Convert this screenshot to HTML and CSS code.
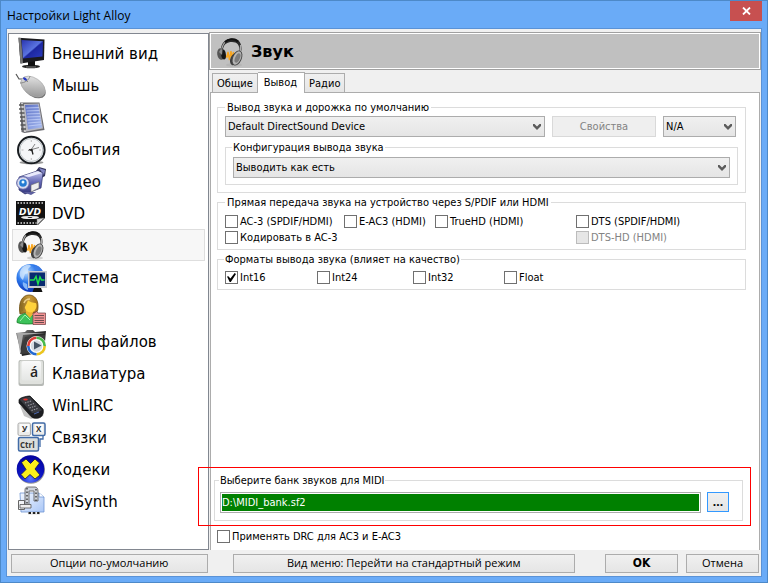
FILE: index.html
```
<!DOCTYPE html>
<html lang="ru">
<head>
<meta charset="utf-8">
<title>Настройки Light Alloy</title>
<link rel="stylesheet" href="styles.css">
</head>
<body>
<svg class="defs" aria-hidden="true">
  <defs>
    <linearGradient id="g-screen" x1="0" y1="0" x2="1" y2="1"><stop offset="0" stop-color="#2a35b0"/><stop offset=".5" stop-color="#5a74e0"/><stop offset=".55" stop-color="#1d27a0"/><stop offset="1" stop-color="#2b3cc0"/></linearGradient>
    <linearGradient id="g-gray" x1="0" y1="0" x2="1" y2="1"><stop offset="0" stop-color="#f0f0f0"/><stop offset="1" stop-color="#8a8a8a"/></linearGradient>
    <linearGradient id="g-dark" x1="0" y1="0" x2="1" y2="1"><stop offset="0" stop-color="#999"/><stop offset=".4" stop-color="#333"/><stop offset="1" stop-color="#0c0c0c"/></linearGradient>
    <linearGradient id="g-violet" x1="0" y1="0" x2="0" y2="1"><stop offset="0" stop-color="#c4c6ee"/><stop offset=".5" stop-color="#6266b4"/><stop offset="1" stop-color="#34377c"/></linearGradient>
    <linearGradient id="g-page" x1="0" y1="0" x2="1" y2="1"><stop offset="0" stop-color="#5b6fc4"/><stop offset="1" stop-color="#a9bdf2"/></linearGradient>
    <radialGradient id="g-globe" cx=".35" cy=".3" r=".8"><stop offset="0" stop-color="#b8dcff"/><stop offset=".45" stop-color="#2a78ec"/><stop offset="1" stop-color="#0522a8"/></radialGradient>
    <radialGradient id="g-codec" cx=".5" cy=".85" r=".8"><stop offset="0" stop-color="#5a78ff"/><stop offset=".5" stop-color="#0d16c4"/><stop offset="1" stop-color="#0404a0"/></radialGradient>
    <linearGradient id="g-key" x1="0" y1="0" x2="0" y2="1"><stop offset="0" stop-color="#fafafa"/><stop offset="1" stop-color="#e4e6e4"/></linearGradient>
    <linearGradient id="g-doc" x1="0" y1="0" x2="1" y2="1"><stop offset="0" stop-color="#f2f7ff"/><stop offset="1" stop-color="#a9c6f6"/></linearGradient>
    <linearGradient id="g-hair" x1="0" y1="0" x2="1" y2="0"><stop offset="0" stop-color="#8a6a22"/><stop offset=".5" stop-color="#c79a3c"/><stop offset="1" stop-color="#a87418"/></linearGradient>
    <symbol id="headphones" viewBox="0 1 32 30">
      <ellipse cx="19" cy="29" rx="8" ry="1.800" fill="#aaa" opacity=".5"/>
      <path d="M6 12C7 6 11 3 17 2.500c7-.5 10 5 9.500 12l-2 1C25 9 22 6 17 6c-5 0-8 2-9 7z" fill="#2a2a2a"/>
      <path d="M10 6c3-3 9-4 13-.5" stroke="#111" stroke-width="2" fill="none"/>
      <path d="M7 12c1-3 2-5 3-5.500M25.500 9v6" stroke="#aaa" stroke-width="1.200" fill="none"/>
      <path d="M10 20l2 1 1-5 1.500 8 1.500-9 1 8 1.500-7 .5 4" stroke="#f9a51c" stroke-width="1.400" fill="none"/>
      <ellipse cx="6" cy="18" rx="3.800" ry="5.800" transform="rotate(-8 6 18)" fill="#555"/>
      <ellipse cx="8.500" cy="18.500" rx="2.400" ry="5" transform="rotate(-8 8.500 18.500)" fill="#161616"/>
      <path d="M4 16l2-3 1.500 1-.5 5z" fill="#8e8e8e"/>
      <ellipse cx="19.500" cy="23" rx="4" ry="6.500" transform="rotate(24 19.500 23)" fill="#3f3f3f"/>
      <ellipse cx="22" cy="22" rx="4.300" ry="7.500" transform="rotate(24 22 22)" fill="#b4b4b4" stroke="#444" stroke-width=".9"/>
      <ellipse cx="22.500" cy="22" rx="2.300" ry="5" transform="rotate(24 22.500 22)" fill="#7c7c7c"/>
    </symbol>
    <symbol id="chevron" viewBox="0 0 8 6"><path d="M0 0h1.500L4 2.500 6.500 0H8v2L4 6 0 2z" fill="#5c5c5c"/></symbol>
  </defs>
</svg>

<div class="window">
  <header class="titlebar">
    <h1 class="title">Настройки Light Alloy</h1>
    <button class="close" type="button" aria-label="Закрыть"><svg width="9" height="8" viewBox="0 0 9 8"><path d="M1 0.500L8 7.500M8 .5L1 7.500" stroke="#fff" stroke-width="1.800"/></svg></button>
  </header>

  <div class="client">
    <main class="content">
      <nav class="sections">
        <a class="section" href="#"><svg class="icon" viewBox="0 1 32 30">
          <ellipse cx="15" cy="29.500" rx="9" ry="1.800" fill="#222"/><path d="M12 24h7v5h-7z" fill="#111"/>
          <path d="M2.500 .8L28.500 2.500 28 23 4.500 26.500z" fill="#1a1a1e"/><path d="M2.500 .8L5 1l2 25-2.500.5z" fill="#777"/>
          <path d="M5.500 3L27 4.300 26.500 19.500 7 21.500z" fill="url(#g-screen)"/><path d="M10 30h10" stroke="#777"/></svg>Внешний вид</a>
        <a class="section" href="#"><svg class="icon" viewBox="0 1 32 30">
          <path d="M0 5l3 5 6 0" stroke="#555" fill="none" stroke-width="1.200"/>
          <ellipse cx="18" cy="19.500" rx="13" ry="8" transform="rotate(34 18 19.500)" fill="#777"/>
          <ellipse cx="17" cy="17.500" rx="13.500" ry="8.500" transform="rotate(34 17 17.500)" fill="url(#g-gray)" stroke="#aaa" stroke-width=".7"/>
          <path d="M4 14c5 0 9-3 10-7M9 10l3 3" stroke="#888" fill="none"/><ellipse cx="9" cy="10" rx="2.200" ry="1.300" transform="rotate(34 9 10)" fill="#2436c0"/></svg>Мышь</a>
        <a class="section" href="#"><svg class="icon" viewBox="0 1 32 30">
          <path d="M4 1.500h19.500l5 27.500-20 3-3-1z" fill="#6a6a70"/><path d="M7 3l16-.5 4 25-17 3z" fill="#b8b8c0"/><path d="M9 4l13-.5 4 23-14 2z" fill="url(#g-page)"/>
          <path d="M10 7l13-.5M10.500 10l13-.5M11 13l13-.5M11.300 16l13-.5M11.600 19l13-.7M12 22l13-1M12.500 25l13-1.500" stroke="#c4d0f8" stroke-width=".8"/>
          <path d="M6 2l3 29" stroke="#ccc" stroke-width="2"/><path d="M3 4h5M3 8h5M3.500 12h5M4 16h5M4 20h5M4.500 24h5M5 28h5" stroke="#555" stroke-width="1.600"/></svg>Список</a>
        <a class="section" href="#"><svg class="icon" viewBox="0 1 32 30">
          <ellipse cx="15.500" cy="29.500" rx="12" ry="1.700" fill="#999"/><circle cx="15.300" cy="17" r="13.300" fill="#f5f6f8" stroke="#181c20" stroke-width="2"/><circle cx="15.300" cy="17" r="11.500" fill="none" stroke="#b9c0c4" stroke-width="1"/>
          <path d="M15.300 7v2M15.300 25v2M5.500 17h2M23 17h2" stroke="#bbb"/><path d="M12 17.500l11-3M15 17l4-6" stroke="#777" stroke-width=".9" fill="none"/><path d="M13 16.500l3 1 1 4" stroke="#222" stroke-width="1.300" fill="none"/><circle cx="15.500" cy="17" r="1.200" fill="#222"/></svg>События</a>
        <a class="section" href="#"><svg class="icon" viewBox="0 1 32 30">
          <path d="M20 6l3-4 7 2-1 7-7 4z" fill="#34355c"/><path d="M23 3l6 2-1 5-3-4z" fill="#8185c4"/>
          <path d="M3 12l18-6 6 2-2 15-16 6-6-4z" fill="url(#g-violet)" stroke="#30336d" stroke-width=".7"/><path d="M7 11l15-5 4 2-13 4z" fill="#e8e9fb"/>
          <circle cx="7" cy="18" r="6.300" fill="#d7daef" stroke="#555a9c"/><circle cx="7" cy="18" r="3.800" fill="#237bd3"/><circle cx="7" cy="17" r="1.500" fill="#e8fbff"/>
          <path d="M15 20l8-3v6l-8 4z" fill="#eee" stroke="#666" stroke-width=".6"/><path d="M7 27l8 3 5-3-5 0z" fill="#5c5f9e"/></svg>Видео</a>
        <a class="section" href="#"><svg class="icon" viewBox="0 1 32 30">
          <path d="M0 4h29v17l-7 7H0z" fill="#121212"/><path d="M21 28v-6l7-1z" fill="#ddd" stroke="#777" stroke-width=".5"/>
          <path d="M1.500 6h27M1.500 26h19" stroke="#ddd" stroke-width="1.600" stroke-dasharray="1.500 1.500"/>
          <text class="ic-dvd" x="3" y="18">DVD</text><ellipse cx="14" cy="20.500" rx="9" ry="1.600" fill="#eee"/><ellipse cx="14" cy="20.500" rx="2.500" ry=".6" fill="#222"/></svg>DVD</a>
        <a class="section selected" href="#" aria-current="page"><svg class="icon"><use href="#headphones"/></svg>Звук</a>
        <a class="section" href="#"><svg class="icon" viewBox="0 1 32 30">
          <circle cx="14.500" cy="17" r="14" fill="url(#g-globe)"/><path d="M6 7c3-4 8-4 9-2l-3 3 1 4-4 1-2 6c-3-2-5-7-1-12z" fill="#ddeeff" opacity=".7"/><path d="M19 4c4 1 7 4 8 7h-6l-3-4z" fill="#3f80e8" opacity=".8"/><path d="M7 21l4 2 1 6c-4-1-6-5-5-8z" fill="#85b8fa"/>
          <path d="M12 10h19v17H12z" fill="#c9ccd0"/><path d="M13.500 11.500h15.500v13.500H13.500z" fill="#082a70"/><path d="M14 19h4l2-3.500 2 7.500 2-7 1.500 3h3" stroke="#1fe04b" stroke-width="1.500" fill="none"/><path d="M18 27h7l1.500 4h-10z" fill="#111"/></svg>Система</a>
        <a class="section" href="#"><svg class="icon" viewBox="0 1 32 30">
          <path d="M4 21C2 10 6 2 13 2c6 0 9 5 9 11 0 3 0 5-2 7H8z" fill="url(#g-hair)" stroke="#6f4e10" stroke-width=".8"/>
          <path d="M1 29.500c0-5 3-8 8-9l5 3 4-2c4 1 5 4 5 8-6 2-17 2-22 0z" fill="#3cc25a" stroke="#157b25" stroke-width=".8"/>
          <path d="M10 17h7v4l-3 4-4-4z" fill="#eab42e"/><ellipse cx="14.500" cy="13" rx="6" ry="6.500" fill="#ffd23c"/>
          <path d="M5.500 18C4 9 8 4 14 4c4 0 7 2 7 6-4 0-8-1-9-3-1 4-3 6-5 11z" fill="url(#g-hair)"/><path d="M8 10c1-3 3-4 6-4" stroke="#ecd08c" stroke-width="1.500" fill="none"/>
          <path d="M4 28l5-6 5 5" stroke="#a6eeb2" fill="none"/>
          <path d="M17 20h2l1-2 2 2h7.500v11.500H17z" fill="#f29494" stroke="#6b3a3d" stroke-width=".7"/><path d="M18.500 22.500h9.500M18.500 25h9.500M18.500 27.500h9.500M18.500 29.500h9.500" stroke="#5e4447" stroke-width=".9"/></svg>OSD</a>
        <a class="section" href="#"><svg class="icon" viewBox="0 1 32 30">
          <path d="M0 8l9-1 2-2h6l2 2 11-1-2 21-22 4z" fill="url(#g-dark)"/><path d="M1 8l3 20L7 10l22-2" fill="#aaa"/><path d="M4 29L9 12l20-2-1 18z" fill="#3c3c3c"/>
          <circle cx="20.500" cy="21" r="10" fill="#fff"/><g fill="none" stroke-width="2.600"><path d="M12.300 21a8.200 8.200 0 0 1 8.200-8.200" stroke="#df3e35"/><path d="M20.500 12.800a8.200 8.200 0 0 1 8.200 8.200" stroke="#49b94c"/><path d="M28.700 21a8.200 8.200 0 0 1-8.200 8.200" stroke="#ecc51c"/><path d="M20.500 29.200a8.200 8.200 0 0 1-8.200-8.200" stroke="#2369d2"/></g><circle cx="20.500" cy="21" r="5.800" fill="#d5dbe3"/><path d="M18 16.500l7.500 4-7.500 4z" fill="#455364"/></svg>Типы файлов</a>
        <a class="section" href="#"><svg class="icon" viewBox="0 1 32 30">
          <rect x="2.500" y="3" width="25.500" height="26" rx="2" fill="#b6b9b5"/><rect x="3.500" y="3.500" width="23.500" height="23.500" rx="2" fill="#dfe1dd"/><rect x="5.500" y="4" width="19.500" height="19.500" rx="2" fill="url(#g-key)"/><text class="ic-key" x="14" y="20">á</text></svg>Клавиатура</a>
        <a class="section" href="#"><svg class="icon" viewBox="0 1 32 30">
          <path d="M4 17l4 10 7 3 13-3" fill="#c4c4c4"/><path d="M3 11c0-2 7-4 11-4l13 13c1 3 0 7-3 8.500s-7 1-9-1L3 14z" fill="#1d1e22" stroke="#111" stroke-width=".7"/><path d="M4 11c0-2 7-3 10-3l12 13c-2 2-7 3-10 3z" fill="#3a3b41"/>
          <ellipse cx="9.500" cy="10.500" rx="2.300" ry="1.100" fill="#e3312c"/><path d="M9 14l6-2M12 16.500l6-2M13.500 19l6-2M15.500 21.500l6-2" stroke="#9c9ca4" stroke-width="1.100" stroke-dasharray="1.400 1.100"/><path d="M18 25l5-2" stroke="#4d69b2"/></svg>WinLIRC</a>
        <a class="section" href="#"><svg class="icon" viewBox="0 1 32 30">
          <path d="M27 14v4h-3v8" stroke="#416ba7" fill="none" stroke-width="1.300"/><rect x="2" y="2" width="12.500" height="12.500" rx="1.500" fill="#ececea" stroke="#aaa"/><rect x="16.500" y="2" width="12.500" height="12.500" rx="1.500" fill="#ececea" stroke="#416ba7" stroke-width="1.500"/><rect x="2.500" y="16.500" width="20" height="13.500" rx="1.500" fill="#dcdedc" stroke="#416ba7" stroke-width="1.500"/><path d="M4 3h9v8H4zM19 3h8v8h-8z" fill="#fafafa"/>
          <text class="ic-cap" x="6" y="11">У</text><text class="ic-cap" x="20" y="11">X</text><text class="ic-cap" x="4" y="27">Ctrl</text></svg>Связки</a>
        <a class="section" href="#"><svg class="icon" viewBox="0 1 32 30">
          <circle cx="15" cy="16.800" r="14" fill="#999"/><circle cx="14.500" cy="16" r="13.800" fill="url(#g-codec)"/><path d="M5.500 9.500l4.500-3.500 4.500 4.500L19 6l4.500 4-4.500 6 5 6-5 4-5-4.500L9 26l-4-4.500 5-5z" fill="#fbf01c" stroke="#131346" stroke-width=".8" stroke-linejoin="round"/></svg>Кодеки</a>
        <a class="section" href="#"><svg class="icon" viewBox="0 1 32 30">
          <path d="M4 8h19l5 4v15H5z" fill="url(#g-doc)" stroke="#6e95d3" stroke-width=".8"/><path d="M23 8v4h5" fill="#fff" stroke="#6e95d3" stroke-width=".8"/>
          <path d="M2.500 15.500h6v9h-6z" fill="#f1f3f6" stroke="#666"/><path d="M9 20V5c0-2 1-3 3-3h7c2 0 3 2 3 4v10h-4V6h-5v14z" fill="#cfd4dc" stroke="#555" stroke-width=".8"/><path d="M11 3v16M20 4v12" stroke="#222" stroke-width="1.200" stroke-dasharray="1.500 2"/><path d="M4 19.500h11v3.500H4z" fill="#eee" stroke="#555" stroke-width=".8"/><path d="M12 27h12v3H12z" fill="#eee"/><path d="M12.500 28h11" stroke="#222" stroke-width="2" stroke-dasharray="2.500 1.800"/></svg>AviSynth</a>
      </nav>

      <section class="page">
        <header class="page-head"><svg class="icon"><use href="#headphones"/></svg><h2>Звук</h2></header>
        <div class="tabs" role="tablist">
          <button class="tab" type="button" role="tab">Общие</button>
          <button class="tab active" type="button" role="tab" aria-selected="true">Вывод</button>
          <button class="tab" type="button" role="tab">Радио</button>
        </div>
        <form class="panel">
          <fieldset class="group output">
            <legend class="inset">Вывод звука и дорожка по умолчанию</legend>
            <div class="device-row">
              <div class="select grow"><select aria-label="Устройство вывода"><option>Default DirectSound Device</option></select><svg><use href="#chevron"/></svg></div>
              <button class="btn props" type="button" disabled>Свойства</button>
              <div class="select track"><select aria-label="Дорожка"><option>N/A</option></select><svg><use href="#chevron"/></svg></div>
            </div>
            <fieldset class="group nested">
              <legend>Конфигурация вывода звука</legend>
              <div class="select"><select aria-label="Конфигурация вывода звука"><option>Выводить как есть</option></select><svg><use href="#chevron"/></svg></div>
            </fieldset>
          </fieldset>

          <fieldset class="group spdif">
            <legend class="inset">Прямая передача звука на устройство через S/PDIF или HDMI</legend>
            <div class="checks passthrough">
              <label class="check"><input type="checkbox">AC-3 (SPDIF/HDMI)</label>
              <label class="check"><input type="checkbox">E-AC3 (HDMI)</label>
              <label class="check"><input type="checkbox">TrueHD (HDMI)</label>
              <label class="check"><input type="checkbox">DTS (SPDIF/HDMI)</label>
              <label class="check wide"><input type="checkbox">Кодировать в AC-3</label>
              <label class="check off"><input type="checkbox" disabled>DTS-HD (HDMI)</label>
            </div>
          </fieldset>

          <fieldset class="group">
            <legend>Форматы вывода звука (влияет на качество)</legend>
            <div class="checks formats">
              <label class="check"><input type="checkbox" checked>Int16</label>
              <label class="check"><input type="checkbox">Int24</label>
              <label class="check"><input type="checkbox">Int32</label>
              <label class="check"><input type="checkbox">Float</label>
            </div>
          </fieldset>

          <div class="midi">
            <fieldset class="group">
              <legend>Выберите банк звуков для MIDI</legend>
              <div class="file-row">
                <input class="path" type="text" value="D:\MIDI_bank.sf2" aria-label="Банк звуков для MIDI">
                <button class="btn browse" type="button">...</button>
              </div>
            </fieldset>
          </div>
          <label class="check"><input type="checkbox">Применять DRC для AC3 и E-AC3</label>
        </form>
      </section>
    </main>

    <footer class="actions">
      <button class="btn defaults" type="button">Опции по-умолчанию</button>
      <button class="btn menu-view" type="button">Вид меню: Перейти на стандартный режим</button>
      <button class="btn ok" type="button">OK</button>
      <button class="btn cancel" type="button">Отмена</button>
    </footer>
  </div>
</div>
</body>
</html>
```
FILE: styles.css
```
* { box-sizing: border-box; }

body {
  margin: 0;
  font: 11px/13px "DejaVu Sans Condensed", "DejaVu Sans", sans-serif;
  color: #000;
}

h1, h2 { margin: 0; font-weight: normal; }
button, input, select { font: inherit; color: inherit; margin: 0; border-radius: 0; }
.defs { position: absolute; width: 0; height: 0; }

.window {
  display: flex;
  flex-direction: column;
  min-height: 100vh;
  padding: 0 5px 5px;
  border: 1px solid #4d89c8;
  background: #6aabf7;
}

.titlebar { display: flex; justify-content: space-between; height: 27px; }
.title { font: 12px/27px "Open Sans", "Noto Sans", sans-serif; padding: 1px 0 0 1px; }
.close {
  display: flex;
  align-items: center;
  justify-content: center;
  width: 32px;
  height: 20px;
  padding: 0;
  border: 0;
  background: #c75050;
}

.client {
  display: flex;
  flex: 1;
  flex-direction: column;
  border: 1px solid #5a92d6;
  background: #f0f0f0;
}

.content { display: flex; flex: 1; padding: 3px 0 0 1px; }

.sections {
  flex: none;
  width: 201px;
  margin-top: 1px;
  padding: 3px;
  border: 1px solid #828790;
  background: #fff;
}
.section {
  display: flex;
  align-items: flex-start;
  gap: 4px;
  height: 32px;
  padding: 0 3px;
  border: 1px solid transparent;
  color: #000;
  font: 15px/32px "DejaVu Sans", sans-serif;
  text-decoration: none;
}
.section.selected { border-color: #dedede; background: #f7f7f7; }
.icon { flex: none; width: 32px; height: 30px; overflow: visible; }
.ic-dvd { font: italic bold 9px "DejaVu Sans", sans-serif; fill: #fff; }
.ic-key { font: 600 14px "Open Sans", sans-serif; fill: #222; }
.ic-cap { font: bold 8px "Open Sans", sans-serif; fill: #333; }

.page { display: flex; flex: 1; flex-direction: column; min-width: 0; }
.page-head {
  display: flex;
  align-items: center;
  gap: 4px;
  height: 38px;
  padding: 2px 0 0 5px;
  border: 1px solid #a0a0a0;
  background: #c0c0c0;
  box-shadow: inset 0 0 0 1px #fff;
}
.page-head h2 { font: bold 16px/20px "DejaVu Sans", sans-serif; }

.tabs { display: flex; align-items: flex-end; height: 22px; padding-left: 3px; }
.tab {
  height: 19px;
  padding: 0 4px;
  border: 1px solid #acacac;
  border-width: 1px 1px 0 0;
  background: linear-gradient(#f0f0f0, #e6e6e6);
}
.tab:first-child { border-left-width: 1px; }
.tab.active { z-index: 1; height: 21px; margin-bottom: -1px; padding: 0 7px 2px 6px; background: #fff; }

.panel {
  display: flex;
  flex: 1;
  flex-direction: column;
  margin: 0 1px 0 1px;
  padding: 8px 13px 6px 6px;
  border: 1px solid #acacac;
  border-bottom: 0;
  background: #fff;
}

.group {
  min-width: 0;
  margin: 0 0 3px;
  padding: 4px 7px;
  border: 1px solid #dcdcdc;
}
.group legend { height: 13px; padding: 0 1px; margin-left: -1px; }
.group legend.inset { padding: 0 2px; margin-left: 0; }
.group.output { padding: 2px 7px 5px; }
.group .nested { margin: 4px 0 2px; padding: 3px 7px 6px; }
.group.spdif { padding-top: 5px; }

.device-row { display: flex; gap: 7px; padding-right: 2px; }
.select { position: relative; }
.select select {
  display: block;
  width: 100%;
  height: 21px;
  padding: 0 20px 0 2px;
  border: 1px solid #acacac;
  background: linear-gradient(#f0f0f0, #e5e5e5);
  appearance: none;
}
.select svg { position: absolute; top: 8px; right: 4px; width: 8px; height: 6px; pointer-events: none; }
.grow { flex: 1; }
.track { width: 73px; }

.btn {
  height: 19px;
  padding: 0;
  border: 1px solid #acacac;
  background: linear-gradient(#f0f0f0, #e5e5e5);
  text-align: center;
}
.props { width: 104px; height: 21px; border-color: #d9d9d9; background: #efefef; color: #838383; }

.checks { display: grid; row-gap: 1px; }
.passthrough { grid-template-columns: 119px 91px 141px 1fr; }
.formats { grid-template-columns: 92px 96px 91px 1fr; }
.wide { grid-column: span 3; }
.check { display: flex; align-items: center; gap: 2px; height: 15px; white-space: nowrap; }
.check input {
  flex: none;
  width: 13px;
  height: 13px;
  border: 1px solid #707070;
  background: #fff;
  appearance: none;
}
.check input:checked::before {
  content: "";
  display: block;
  width: 9px;
  height: 9px;
  margin: 1px;
  background: #000;
  clip-path: polygon(0 40%, 15% 35%, 38% 62%, 85% 0, 100% 10%, 42% 100%, 30% 100%);
}
.check.off { color: #838383; }
.check.off input { border-color: #bcbcbc; background: #e6e6e6; }

.midi { position: relative; margin: auto -1px 8px -3px; width: 529px; max-width: calc(100% + 3px); }
.midi::after {
  content: "";
  position: absolute;
  inset: -7px -8px -5px -16px;
  border: 1px solid #f00;
  pointer-events: none;
}
.midi .group { margin: 0; padding: 5px 13px 7px 5px; }
.file-row { display: flex; gap: 6px; }
.path {
  flex: 1;
  min-width: 0;
  height: 21px;
  padding: 0 1px;
  border: 1px solid #acacac;
  background: #008000 content-box;
  box-shadow: inset 0 0 0 1px #fff;
  color: #fff;
}
.browse { width: 22px; height: 20px; border-color: #3399ff; font: bold 12px/14px "Open Sans", sans-serif; }

.actions { display: flex; align-items: center; height: 26px; padding: 0 2px 0 4px; }
.actions .btn { font: 500 11px/14px "Open Sans", "Noto Sans", sans-serif; }
.defaults { flex: 196 1 0; margin-right: 25px; }
.menu-view { flex: 343 1 0; margin-right: 30px; }
.ok { width: 73px; margin-right: 8px; }
.actions .ok { font: bold 12px/14px "DejaVu Sans Condensed", sans-serif; }
.cancel { width: 73px; }
```
